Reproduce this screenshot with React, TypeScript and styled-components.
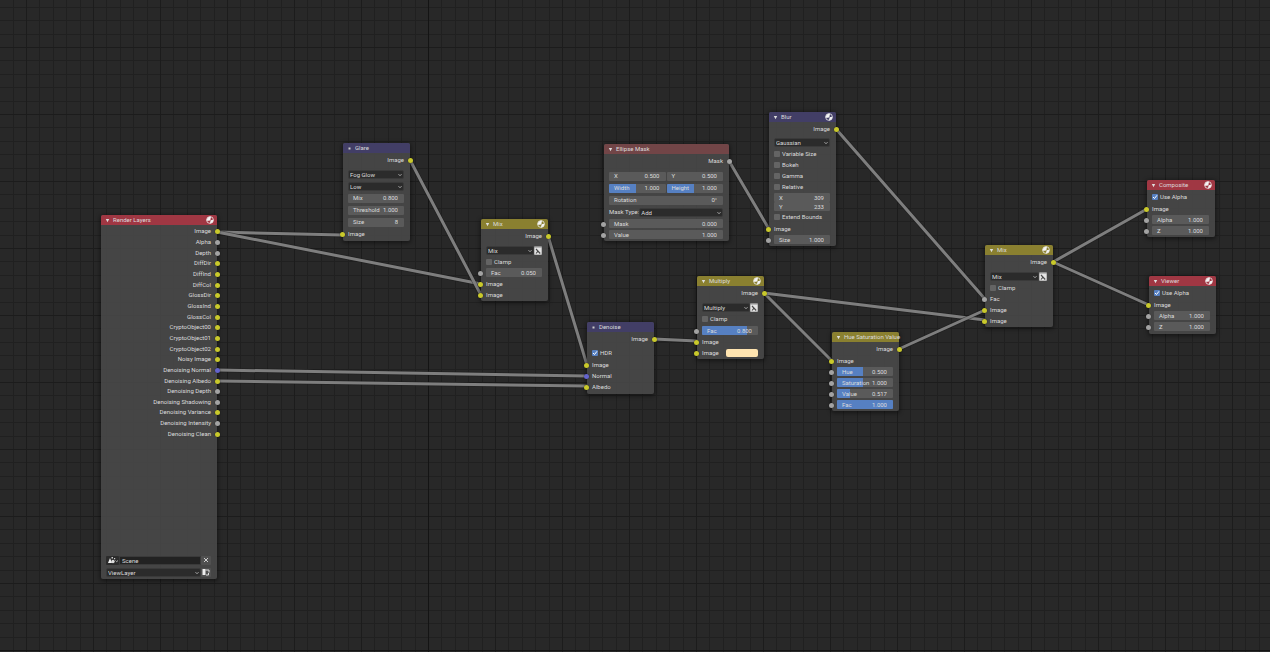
import React, { useId } from "react";
import styled, { createGlobalStyle } from "styled-components";

const color = {
  canvas: "#282828",
  gridMinor: "#202020",
  gridMajor: "#1c1c1c",
  node: "rgba(72, 72, 72, 0.9)",
  text: "#dcdcdc",
  field: "#5a5a5a",
  menu: "#2b2b2b",
  accent: "#5680c2",
  yellow: "#c9c92c",
  grey: "#a3a3a3",
  blue: "#6464cc",
  output: "#a03743",
  matte: "#724547",
  filter: "#423e66",
  tint: "#8a8030",
};

const Global = createGlobalStyle`
  *, *::before, *::after { box-sizing: border-box; }
  html, body { margin: 0; background: ${color.canvas}; }
  body, input, select, button {
    font-family: Roboto, "Open Sans", sans-serif;
    font-size: 6px;
    line-height: 8px;
    color: ${color.text};
  }
`;

const Canvas = styled.main`
  position: relative;
  width: 100%;
  height: 100vh;
  overflow: hidden;
`;

const Layer = styled.svg`
  position: absolute;
  inset: 0;
  width: 100%;
  height: 100%;
  pointer-events: none;
`;

const NodeBox = styled.section<{ $x: number; $y: number; $w: number; $h?: number }>`
  position: absolute;
  left: ${(p) => p.$x}px;
  top: ${(p) => p.$y}px;
  width: ${(p) => p.$w}px;
  height: ${(p) => (p.$h ? `${p.$h}px` : "auto")};
  display: flex;
  flex-direction: column;
  border-radius: 2px;
  background: ${color.node};
  box-shadow: 0 1px 4px 1px rgba(0, 0, 0, 0.45);
`;

const Header = styled.header<{ $tone: string }>`
  display: flex;
  align-items: center;
  gap: 3px;
  height: 10px;
  padding: 0 3px 0 4px;
  border-radius: 2px 2px 0 0;
  background: ${(p) => p.$tone};

  svg {
    flex: none;
  }
`;

const Title = styled.h2`
  flex: 1;
  margin: 0;
  font-size: inherit;
  font-weight: 400;
  white-space: nowrap;
`;

const Body = styled.div`
  flex: 1;
  display: flex;
  flex-direction: column;
  padding: 1px 0;
`;

const Row = styled.div<{ $h?: number; $gap?: number; $end?: boolean }>`
  position: relative;
  display: flex;
  align-items: center;
  justify-content: ${(p) => (p.$end ? "flex-end" : "flex-start")};
  height: ${(p) => p.$h ?? 11}px;
  margin-top: ${(p) => p.$gap ?? 0}px;
  padding: 0 6px 0 5px;
  white-space: nowrap;
`;

const OutputList = styled.div`
  display: flex;
  flex-direction: column;
  height: 213px;
`;

const ListRow = styled(Row)`
  flex: 1;
  height: auto;
`;

const SceneRows = styled.div`
  margin-top: auto;
`;

const Socket = styled.i<{ $side: "in" | "out"; $c: string }>`
  position: absolute;
  top: 50%;
  ${(p) => (p.$side === "in" ? "left" : "right")}: -3px;
  width: 5px;
  height: 5px;
  margin-top: -2px;
  border-radius: 50%;
  background: ${(p) => p.$c};
  box-shadow: 0 0 1px 0 #141414;
`;

const FieldBox = styled.label`
  position: relative;
  flex: 1;
  min-width: 0;
  height: 9px;
  display: flex;
  align-items: center;
  padding: 0 6px 0 5px;
  overflow: hidden;
  border-radius: 1px;
  background: ${color.field};
`;

const Fill = styled.span`
  position: absolute;
  inset: 0 auto 0 0;
  background: ${color.accent};
`;

const Caption = styled.span`
  position: relative;
`;

const Value = styled.input`
  position: relative;
  flex: 1;
  min-width: 0;
  width: 0;
  height: 8px;
  padding: 0;
  border: 0;
  background: none;
  text-align: right;
  outline: none;
`;

const Pair = styled.div`
  flex: 1;
  display: flex;
  gap: 1px;
`;

const MenuBox = styled.div`
  position: relative;
  flex: 1;
  min-width: 0;
  display: flex;
  height: 9px;
  border: 1px solid #3a3a3a;
  border-radius: 2px;
  background: ${color.menu};
`;

const Select = styled.select`
  appearance: none;
  width: 100%;
  height: 7px;
  line-height: 7px;
  padding: 0 8px 0 1px;
  border: 0;
  background: none;
  outline: none;
`;

const Chevron = styled.svg`
  position: absolute;
  right: 1px;
  top: 2px;
  width: 4px;
  height: 4px;
  pointer-events: none;
`;

const IconButton = styled.button<{ $light?: boolean }>`
  display: grid;
  place-items: center;
  width: ${(p) => (p.$light ? 8 : 10)}px;
  height: 9px;
  padding: 0;
  border: 0;
  border-radius: 1px;
  background: ${(p) => (p.$light ? "#8d8d8d" : "#505050")};
`;

const SceneButton = styled(IconButton)`
  width: 13px;
  background: ${color.menu};
`;

const SceneName = styled.input`
  flex: 1;
  min-width: 0;
  height: 9px;
  padding: 0 2px;
  border: 1px solid #3a3a3a;
  background: #222;
  outline: none;
`;

const CheckLabel = styled.label`
  position: relative;
  display: flex;
  align-items: center;
  gap: 2px;
`;

const CheckInput = styled.input`
  appearance: none;
  width: 6px;
  height: 6px;
  margin: 0;
  border-radius: 1px;
  background: #646464;
  &:checked {
    background: ${color.accent};
  }
`;

const Tick = styled.svg`
  position: absolute;
  left: 0;
  top: 1px;
  width: 6px;
  height: 6px;
  pointer-events: none;
`;

const Swatch = styled.button`
  width: 32px;
  height: 8px;
  margin-left: auto;
  padding: 0;
  border: 0;
  border-radius: 2px;
  background: #ffe4b0;
`;

const Sphere = () => (
  <svg width="8" height="8" viewBox="0 0 16 16" aria-hidden="true">
    <circle cx="8" cy="8" r="6.800" fill="none" stroke="#eee" strokeWidth="1.600" />
    <path d="M10 1.500C5 0.500 1 4 1.500 9.500L7 9.500L9 7Z" fill="#f4f4f4" />
    <path d="M9 8.500L14.500 7.500C15 11.500 12 14.500 8 14.800Z" fill="#f4f4f4" />
  </svg>
);

const Arrow = ({ open }: { open: boolean }) => (
  <svg width="5" height="5" viewBox="0 0 5 5" aria-hidden="true">
    {open ? <path d="M0.800 1h3.400L2.500 4.300z" fill="#ddd" /> : <path d="M1.500 1.500h2v2h-2z" fill="#ccc" />}
  </svg>
);

const Down = () => (
  <Chevron viewBox="0 0 4 4" aria-hidden="true">
    <path d="M0.500 1.200L2 2.700L3.500 1.200" fill="none" stroke="#bbb" strokeWidth="0.900" />
  </Chevron>
);

type NodeProps = {
  title: string;
  tone: string;
  x: number;
  y: number;
  w?: number;
  h?: number;
  open?: boolean;
  preview?: boolean;
  children: React.ReactNode;
};

const Node = ({ title, tone, x, y, w = 67, h, open = true, preview, children }: NodeProps) => (
  <NodeBox $x={x} $y={y} $w={w} $h={h}>
    <Header $tone={tone}>
      <Arrow open={open} />
      <Title>{title}</Title>
      {preview && <Sphere />}
    </Header>
    <Body>{children}</Body>
  </NodeBox>
);

const Output = ({ name = "Image", c = color.yellow }: { name?: string; c?: string }) => (
  <Row $h={12} $end>
    {name}
    <Socket $side="out" $c={c} />
  </Row>
);

const Input = ({ name = "Image", c = color.yellow, h, gap }: { name?: string; c?: string; h?: number; gap?: number }) => (
  <Row $h={h} $gap={gap}>
    {name}
    <Socket $side="in" $c={c} />
  </Row>
);

const Field = ({ name, value, fill }: { name: string; value: string; fill?: number }) => (
  <FieldBox>
    {fill !== undefined && <Fill style={{ width: `${fill}%` }} />}
    <Caption>{name}</Caption>
    <Value defaultValue={value} />
  </FieldBox>
);

type FieldRowProps = { name: string; value: string; fill?: number; h?: number; gap?: number; socket?: boolean };

const FieldRow = ({ h, gap, socket, ...field }: FieldRowProps) => (
  <Row $h={h} $gap={gap}>
    {socket && <Socket $side="in" $c={color.grey} />}
    <Field {...field} />
  </Row>
);

const Menu = ({ value, label }: { value: string; label: string }) => (
  <MenuBox>
    <Select aria-label={label} defaultValue={value}>
      <option>{value}</option>
    </Select>
    <Down />
  </MenuBox>
);

const Check = ({ name, checked, h, gap }: { name: string; checked?: boolean; h?: number; gap?: number }) => {
  const id = useId();
  return (
    <Row $h={h} $gap={gap}>
      <CheckLabel htmlFor={id}>
        <CheckInput id={id} type="checkbox" defaultChecked={checked} />
        {checked && (
          <Tick viewBox="0 0 6 6" aria-hidden="true">
            <path d="M1 3L2.500 4.500L5 1.300" fill="none" stroke="#fff" strokeWidth="1" />
          </Tick>
        )}
        {name}
      </CheckLabel>
    </Row>
  );
};

const BlendMenu = ({ value }: { value: string }) => (
  <Row $gap={3}>
    <Menu value={value} label="Blend mode" />
    <IconButton $light aria-label="Include alpha">
      <svg width="8" height="8" viewBox="0 0 8 8" aria-hidden="true">
        <path d="M0.500 0.500H7.500V7.500H0.500Z" fill="#e4e4e4" />
        <path d="M2 2L6.200 6.500M4 4.200L2 6.500" fill="none" stroke="#4a4a4a" strokeWidth="1.100" />
      </svg>
    </IconButton>
  </Row>
);

const passes: [string, string][] = [
  ["Image", color.yellow],
  ["Alpha", color.grey],
  ["Depth", color.grey],
  ["DiffDir", color.yellow],
  ["DiffInd", color.yellow],
  ["DiffCol", color.yellow],
  ["GlossDir", color.yellow],
  ["GlossInd", color.yellow],
  ["GlossCol", color.yellow],
  ["CryptoObject00", color.yellow],
  ["CryptoObject01", color.yellow],
  ["CryptoObject02", color.yellow],
  ["Noisy Image", color.yellow],
  ["Denoising Normal", color.blue],
  ["Denoising Albedo", color.yellow],
  ["Denoising Depth", color.grey],
  ["Denoising Shadowing", color.grey],
  ["Denoising Variance", color.yellow],
  ["Denoising Intensity", color.grey],
  ["Denoising Clean", color.yellow],
];

const links: [number, number, number, number][] = [
  [217, 232, 343, 235],
  [217, 232, 481, 284],
  [217, 370, 587, 376],
  [217, 381, 587, 386],
  [410, 160, 481, 295],
  [548, 236, 587, 365],
  [654, 339, 697, 341],
  [729, 161, 769, 229],
  [764, 293, 832, 361],
  [764, 293, 985, 320],
  [836, 129, 985, 299],
  [899, 349, 985, 310],
  [1053, 262, 1147, 209],
  [1053, 262, 1149, 305],
];

const Grid = () => (
  <Layer aria-hidden="true">
    <defs>
      <pattern id="grid" x="26" y="47" width="67" height="67" patternUnits="userSpaceOnUse">
        <path
          d="M13 0h1v67h-1zM27 0h1v67h-1zM40 0h1v67h-1zM54 0h1v67h-1zM0 13h67v1h-67zM0 27h67v1h-67zM0 40h67v1h-67zM0 54h67v1h-67z"
          fill={color.gridMinor}
        />
        <path d="M0 0h1v67h-1zM0 0h67v1h-67z" fill={color.gridMajor} />
      </pattern>
    </defs>
    <rect width="100%" height="100%" fill="url(#grid)" />
    <path d="M428 0h1v2000h-1zM0 650h4000v1h-4000z" fill="#141414" />
  </Layer>
);

const Links = () => (
  <Layer aria-hidden="true">
    {links.map(([x1, y1, x2, y2], i) => (
      <g key={i} strokeLinecap="round">
        <line x1={x1} y1={y1} x2={x2} y2={y2} stroke="#1a1a1a" strokeOpacity="0.500" strokeWidth="4.500" />
        <line x1={x1} y1={y1} x2={x2} y2={y2} stroke="#7e7e7e" strokeWidth="3" />
      </g>
    ))}
  </Layer>
);

export default function App() {
  return (
    <>
      <Global />
      <Canvas>
        <Grid />
        <Links />

        <Node title="Render Layers" tone={color.output} x={101} y={215} w={116} h={364} preview>
          <OutputList>
            {passes.map(([name, c]) => (
              <ListRow key={name} $end>
                {name}
                <Socket $side="out" $c={c} />
              </ListRow>
            ))}
          </OutputList>
          <SceneRows>
            <Row $h={12}>
              <SceneButton aria-label="Browse scene">
                <svg width="12" height="8" viewBox="0 0 12 8" aria-hidden="true">
                  <path d="M1 7L3 2L5 7Z" fill="#eee" />
                  <circle cx="6" cy="5.500" r="1.700" fill="#ddd" />
                  <path d="M4.500 1h1.500v1.500h-1.500zM7 2h1.200v1.200h-1.200z" fill="#ccc" />
                  <path d="M8.500 4.500L9.700 5.700L11 4.500" fill="none" stroke="#bbb" strokeWidth="0.900" />
                </svg>
              </SceneButton>
              <SceneName aria-label="Scene" defaultValue="Scene" />
              <IconButton aria-label="Unlink scene">
                <svg width="6" height="6" viewBox="0 0 6 6" aria-hidden="true">
                  <path d="M1 1L5 5M5 1L1 5" stroke="#ddd" strokeWidth="0.900" />
                </svg>
              </IconButton>
            </Row>
            <Row $h={12}>
              <Menu value="ViewLayer" label="View layer" />
              <IconButton aria-label="Render layer">
                <svg width="8" height="8" viewBox="0 0 8 8" aria-hidden="true">
                  <path d="M0.500 1H3.500V7H0.500Z" fill="#eee" />
                  <path d="M3.500 2H7V4.500M4 7H6.500V5" fill="none" stroke="#ddd" strokeWidth="1" />
                </svg>
              </IconButton>
            </Row>
          </SceneRows>
        </Node>

        <Node title="Glare" tone={color.filter} x={343} y={143} open={false}>
          <Output />
          <Row $h={12} $gap={2}>
            <Menu value="Fog Glow" label="Glare type" />
          </Row>
          <Row $h={12}>
            <Menu value="Low" label="Quality" />
          </Row>
          <FieldRow h={12} name="Mix" value="0.800" />
          <FieldRow h={12} name="Threshold" value="1.000" />
          <FieldRow h={12} name="Size" value="8" />
          <Input h={12} />
        </Node>

        <Node title="Mix" tone={color.tint} x={481} y={219} preview>
          <Output />
          <BlendMenu value="Mix" />
          <Check name="Clamp" />
          <FieldRow name="Fac" value="0.050" socket />
          <Input />
          <Input />
        </Node>

        <Node title="Denoise" tone={color.filter} x={587} y={322} h={72} open={false}>
          <Output />
          <Check gap={2} name="HDR" checked />
          <Input gap={1} />
          <Input name="Normal" c={color.blue} />
          <Input name="Albedo" />
        </Node>

        <Node title="Ellipse Mask" tone={color.matte} x={604} y={144} w={125}>
          <Output name="Mask" c={color.grey} />
          <Row $h={12} $gap={3}>
            <Pair>
              <Field name="X" value="0.500" />
              <Field name="Y" value="0.500" />
            </Pair>
          </Row>
          <Row $h={12}>
            <Pair>
              <Field name="Width" value="1.000" fill={48} />
              <Field name="Height" value="1.000" fill={48} />
            </Pair>
          </Row>
          <FieldRow h={12} name="Rotation" value="0°" />
          <Row $h={12}>
            Mask Type:
            <Menu value="Add" label="Mask type" />
          </Row>
          <FieldRow name="Mask" value="0.000" socket />
          <FieldRow name="Value" value="1.000" socket />
        </Node>

        <Node title="Multiply" tone={color.tint} x={697} y={276} preview>
          <Output />
          <BlendMenu value="Multiply" />
          <Check name="Clamp" />
          <FieldRow gap={1} name="Fac" value="0.800" fill={80} socket />
          <Input />
          <Row>
            Image
            <Socket $side="in" $c={color.yellow} />
            <Swatch aria-label="Color" />
          </Row>
        </Node>

        <Node title="Blur" tone={color.filter} x={769} y={112} preview>
          <Output />
          <Row $gap={2}>
            <Menu value="Gaussian" label="Filter type" />
          </Row>
          <Check name="Variable Size" />
          <Check name="Bokeh" />
          <Check name="Gamma" />
          <Check name="Relative" />
          <FieldRow h={9} gap={1} name="X" value="309" />
          <FieldRow h={9} name="Y" value="233" />
          <Check name="Extend Bounds" />
          <Input gap={1} />
          <FieldRow name="Size" value="1.000" socket />
        </Node>

        <Node title="Hue Saturation Value" tone={color.tint} x={832} y={332}>
          <Output />
          <Input />
          <FieldRow name="Hue" value="0.500" fill={47} socket />
          <FieldRow name="Saturation" value="1.000" fill={47} socket />
          <FieldRow name="Value" value="0.517" fill={24} socket />
          <FieldRow name="Fac" value="1.000" fill={100} socket />
        </Node>

        <Node title="Mix" tone={color.tint} x={985} y={245} w={68} preview>
          <Output />
          <BlendMenu value="Mix" />
          <Check name="Clamp" />
          <Input name="Fac" c={color.grey} />
          <Input />
          <Input />
        </Node>

        <Node title="Composite" tone={color.output} x={1147} y={180} w={68} preview>
          <Check h={12} name="Use Alpha" checked />
          <Input />
          <FieldRow name="Alpha" value="1.000" socket />
          <FieldRow name="Z" value="1.000" socket />
        </Node>

        <Node title="Viewer" tone={color.output} x={1149} y={276} h={58} preview>
          <Check h={12} name="Use Alpha" checked />
          <Input />
          <FieldRow name="Alpha" value="1.000" socket />
          <FieldRow name="Z" value="1.000" socket />
        </Node>
      </Canvas>
    </>
  );
}
